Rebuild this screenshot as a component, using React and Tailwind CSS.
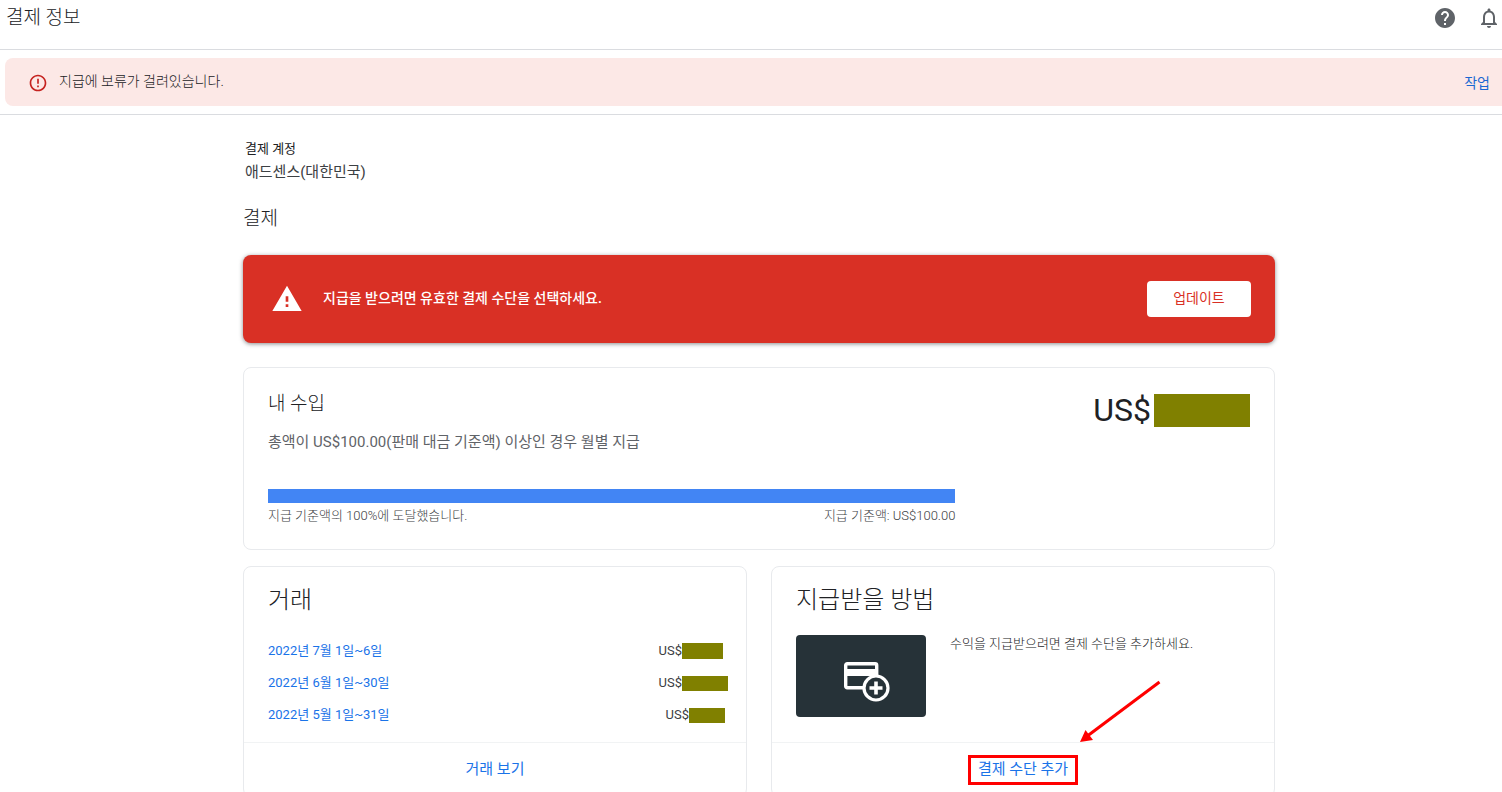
import React from "react";
import { MdHelp, MdNotificationsNone, MdErrorOutline, MdWarning } from "react-icons/md";

const transactions = [
  { period: "2022년 7월 1일~6일", indent: "pl-0", mask: "w-[41px] h-4" },
  { period: "2022년 6월 1일~30일", indent: "pl-0", mask: "w-[46px] h-[15px]" },
  { period: "2022년 5월 1일~31일", indent: "pl-[7px]", mask: "w-9 h-[15px]" },
];

function AddCardIcon() {
  return (
    <svg width="48" height="42" viewBox="0 0 48 42" fill="none" aria-hidden="true">
      <rect x="2.7" y="2.7" width="31" height="24" rx="1.5" stroke="#fff" strokeWidth="3.4" />
      <path d="M2 8h32v7H2z" fill="#fff" />
      <circle cx="33" cy="27" r="12" fill="#263238" stroke="#fff" strokeWidth="3.2" />
      <path d="M33 20.5v13M26.5 27h13" stroke="#fff" strokeWidth="3.6" />
    </svg>
  );
}

function Header() {
  return (
    <header className="flex h-[50px] items-start justify-between border-b border-[#dadce0] pl-1.5 pr-px">
      <h1 className="pt-1.5 text-[19px] font-light leading-6 text-[#202124]">결제 정보</h1>
      <div className="flex gap-5 pt-1.5 text-[#5f6368]">
        <button type="button" aria-label="도움말">
          <MdHelp size={24} />
        </button>
        <button type="button" aria-label="알림">
          <MdNotificationsNone size={24} />
        </button>
      </div>
    </header>
  );
}

function HoldNotice() {
  return (
    <div className="border-b border-[#dadce0] py-2 pl-[5px]">
      <div className="flex h-12 items-center rounded-l-lg bg-[#fce8e6] pl-[23px] pr-3 pt-0.5">
        <MdErrorOutline size={20} className="text-[#c5221f]" />
        <p className="grow pb-1 pl-[11px] text-sm font-light text-[#202124]">지급에 보류가 걸려있습니다.</p>
        <a href="#action" className="text-sm text-[#1967d2]">작업</a>
      </div>
    </div>
  );
}

function Earnings() {
  return (
    <section className="mt-6 rounded-lg border border-[#e8eaed] px-6 pb-[25px] pt-6">
      <div className="flex items-start justify-between">
        <div>
          <h3 className="text-[19px] font-light leading-6 text-[#202124]">내 수입</h3>
          <p className="mt-4 text-[15px] leading-5 text-[#5f6368]">
            총액이 US$100.00(판매 대금 기준액) 이상인 경우 월별 지급
          </p>
        </div>
        <div className="flex items-center gap-[3px]">
          <span className="text-[32px] leading-9 text-[#202124]">US$</span>
          <span className="h-[33px] w-24 bg-[#808000]" />
        </div>
      </div>
      <div className="mt-[37px] w-[70%]">
        <div className="h-3.5 bg-[#4285f4]" />
        <div className="flex justify-between pt-[5px] text-[13px] font-light leading-4 text-[#3c4043]">
          <span>지급 기준액의 100%에 도달했습니다.</span>
          <span>지급 기준액: US$100.00</span>
        </div>
      </div>
    </section>
  );
}

function Transactions() {
  return (
    <section className="flex flex-col rounded-lg border border-[#e8eaed]">
      <div className="grow pl-6 pr-[18px] pt-[17px]">
        <h3 className="text-2xl font-light leading-8 text-[#202124]">거래</h3>
        <table className="mt-[19px] w-full border-collapse text-[13px]">
          <tbody>
            {transactions.map((t) => (
              <tr key={t.period} className="h-8">
                <td className="p-0">
                  <a href="#transactions" className="text-[#1a73e8]">{t.period}</a>
                </td>
                <td className="w-[69px] p-0">
                  <div className={`flex items-center text-[#3c4043] ${t.indent}`}>
                    <span>US$</span>
                    <span className={`shrink-0 bg-[#808000] ${t.mask}`} />
                  </div>
                </td>
              </tr>
            ))}
          </tbody>
        </table>
      </div>
      <div className="flex h-[54px] items-center justify-center border-t border-[#f1f3f4]">
        <a href="#all" className="text-[15px] text-[#1a73e8]">거래 보기</a>
      </div>
    </section>
  );
}

function PayoutMethod() {
  return (
    <section className="relative flex flex-col rounded-lg border border-[#e8eaed]">
      <div className="grow px-6 pb-[25px] pt-[17px]">
        <h3 className="text-2xl font-light leading-8 text-[#202124]">지급받을 방법</h3>
        <div className="mt-[19px] flex gap-6">
          <div className="flex h-[82px] w-[130px] shrink-0 items-center justify-center rounded bg-[#263238] pl-3 pt-3">
            <AddCardIcon />
          </div>
          <p className="text-[13px] font-light leading-[18px] text-[#202124]">수익을 지급받으려면 결제 수단을 추가하세요.</p>
        </div>
      </div>
      <div className="flex h-[54px] items-center justify-center border-t border-[#f1f3f4]">
        <a
          href="#add"
          className="flex h-[30px] items-center border-3 border-[#ff0000] px-[7px] text-[15px] text-[#1a73e8]"
        >
          결제 수단 추가
        </a>
      </div>
      <svg
        className="pointer-events-none absolute bottom-[52px] left-[calc(50%+56px)]"
        width="84"
        height="64"
        viewBox="0 0 84 64"
        aria-hidden="true"
      >
        <path d="M80.500 2 9 55.500" stroke="#ff0000" strokeWidth="3" fill="none" />
        <path d="M1 62 6.500 50 14 60z" fill="#ff0000" />
      </svg>
    </section>
  );
}

export default function App() {
  return (
    <div className="min-h-screen bg-white font-[Roboto,'Noto_Sans_CJK_KR',sans-serif]" lang="ko">
      <Header />
      <HoldNotice />
      <main className="pl-4">
        <div className="mx-auto max-w-[1032px] pt-6">
          <div className="pl-0.5">
            <p className="text-[13px] leading-5 text-[#202124]">결제 계정</p>
            <p className="pt-[3px] text-[15px] leading-5 text-[#3c4043]">애드센스(대한민국)</p>
          </div>
          <h2 className="mt-[25px] text-[19px] font-light leading-6 text-[#202124]">결제</h2>
          <div className="mt-6 flex h-22 items-center rounded-lg bg-[#d93025] px-6 pl-7 shadow-[0_1px_4px_rgba(60,64,67,0.6)]">
            <MdWarning size={32} className="text-white" />
            <p className="grow pb-0.5 pl-5 text-sm font-medium text-white">지급을 받으려면 유효한 결제 수단을 선택하세요.</p>
            <button type="button" className="h-9 w-[104px] rounded bg-white pb-0.5 text-sm text-[#d93025]">
              업데이트
            </button>
          </div>
          <Earnings />
          <div className="mt-4 grid grid-cols-2 gap-6">
            <Transactions />
            <PayoutMethod />
          </div>
        </div>
      </main>
    </div>
  );
}
